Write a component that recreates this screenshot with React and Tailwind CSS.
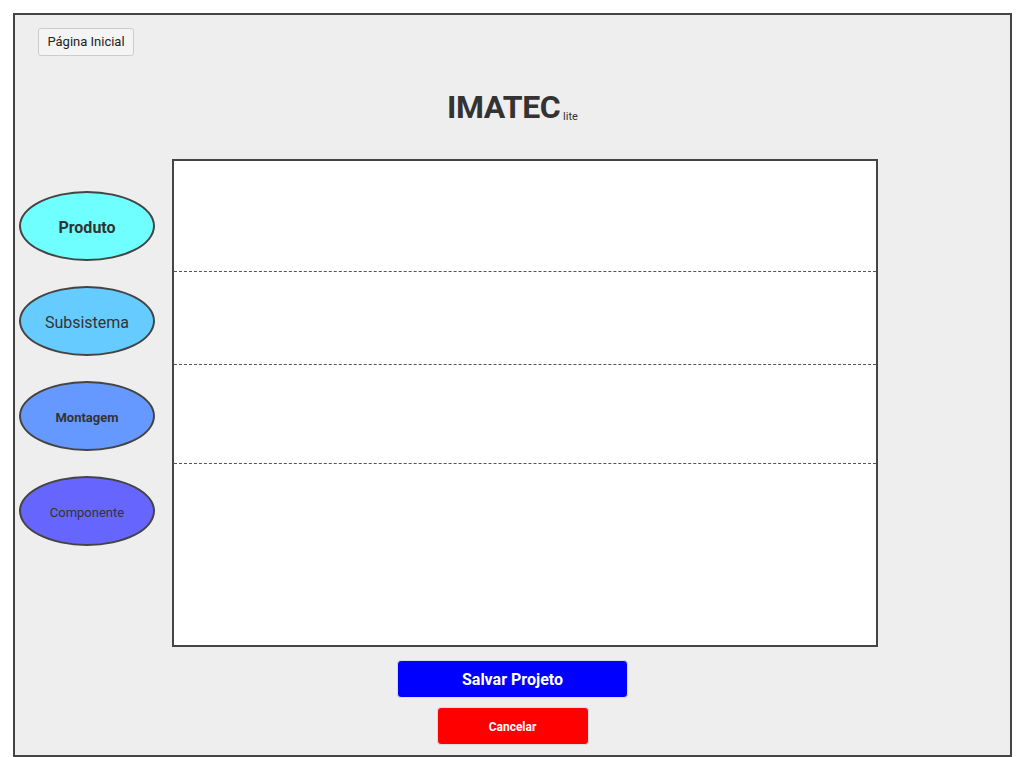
import React from 'react';

const nodes = [
    { label: 'Produto', bg: 'bg-[#70ffff]', text: 'text-[16px] font-bold' },
    { label: 'Subsistema', bg: 'bg-[#66ccff]', text: 'text-[16px]' },
    { label: 'Montagem', bg: 'bg-[#6699ff]', text: 'text-[13px] font-bold' },
    { label: 'Componente', bg: 'bg-[#6666ff]', text: 'text-[13px]' }
];

export default function App() {
    return (
        <div className="w-[1024px] h-[757px] bg-white pt-[13px] pl-[13px]" style={{ fontFamily: 'Roboto, "Liberation Sans", sans-serif' }}>
            <div className="w-[999px] h-[744px] border-2 border-[#444444] bg-[#eeeeee] flex flex-col">
                {/* Top bar */}
                <div className="pt-[13px] pl-[23px]">
                    <button className="h-[28px] w-[96px] rounded-[3px] border border-[#cccccc] bg-[#f4f4f4] text-[13px] text-[#222222]">
                        Página Inicial
                    </button>
                </div>

                {/* Title */}
                <div className="h-[103px] flex items-baseline justify-center pt-[35px]">
                    <span className="text-[32px] font-bold leading-none text-[#333333] tracking-[-0.5px]">IMATEC</span>
                    <span className="text-[11px] text-[#333333] ml-[3px] relative top-[2px]">lite</span>
                </div>

                {/* Main area */}
                <div className="flex">
                    <div className="ml-[4px] mt-[32px] flex flex-col gap-[25px]">
                        {nodes.map((n) => (
                            <div
                                key={n.label}
                                className={`w-[136px] h-[70px] pt-[3px] rounded-[50%] border-2 border-[#444444] flex items-center justify-center text-[#333333] ${n.bg} ${n.text}`}
                            >
                                {n.label}
                            </div>
                        ))}
                    </div>
                    <div className="ml-[17px] w-[706px] h-[488px] border-2 border-[#444444] bg-white">
                        <div className="h-[111px] border-b border-dashed border-[#555555]"></div>
                        <div className="h-[93px] border-b border-dashed border-[#555555]"></div>
                        <div className="h-[99px] border-b border-dashed border-[#555555]"></div>
                    </div>
                </div>

                {/* Actions */}
                <div className="flex flex-col items-center">
                    <button className="mt-[13px] w-[231px] h-[38px] pt-[2px] rounded-[4px] border border-[#dddddd] bg-[#0000ff] text-white text-[16px] font-bold">
                        Salvar Projeto
                    </button>
                    <button className="mt-[9px] w-[152px] h-[38px] pt-[2px] rounded-[4px] border border-[#dddddd] bg-[#ff0000] text-white text-[12px] font-bold">
                        Cancelar
                    </button>
                </div>
            </div>
        </div>
    );
}
